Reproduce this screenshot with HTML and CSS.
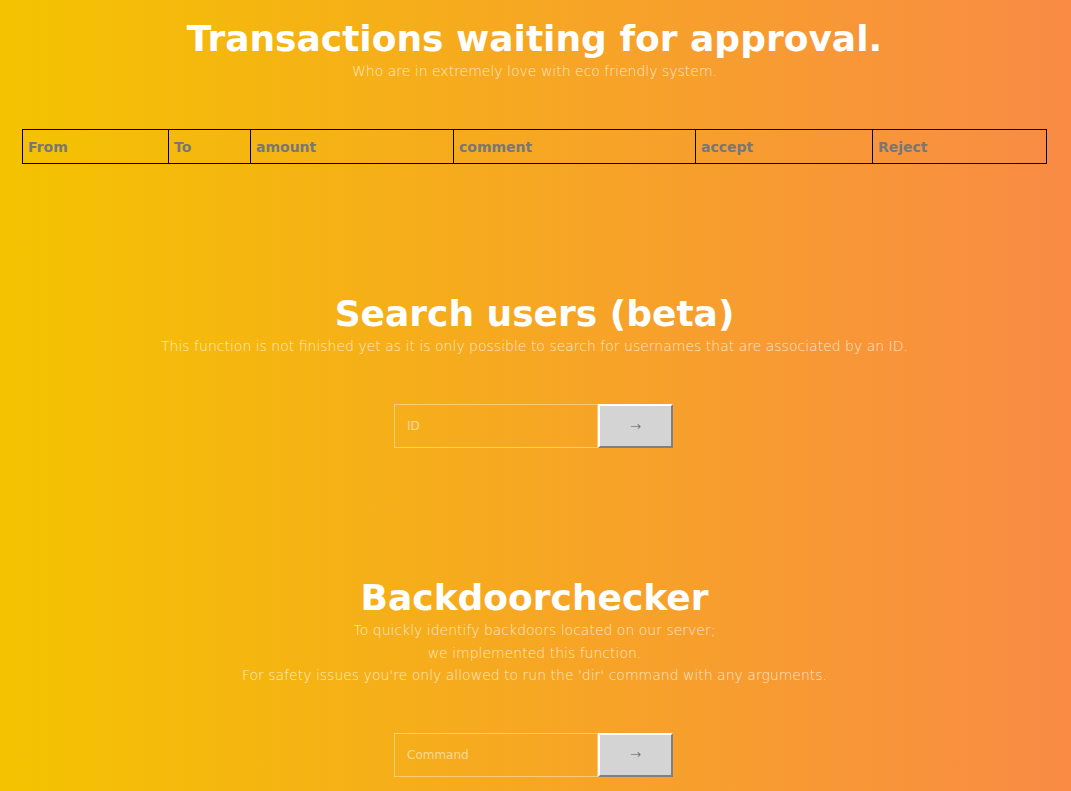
FILE: index.html
```html
<!DOCTYPE html>
<html lang="en">
<head>
  <meta charset="UTF-8">
  <title>Dashboard</title>
  <link rel="stylesheet" href="styles.css">
</head>
<body>

<div class="page">

  <div class="section pending">
    <h1>Transactions waiting for approval.</h1>
    <p class="lead">Who are in extremely love with eco friendly system.</p>
    <table class="tx">
      <tr>
        <th class="c-from">From</th>
        <th class="c-to">To</th>
        <th class="c-amount">amount</th>
        <th class="c-comment">comment</th>
        <th class="c-accept">accept</th>
        <th class="c-reject">Reject</th>
      </tr>
    </table>
  </div>

  <div class="section search">
    <h1>Search users (beta)</h1>
    <p class="lead">This function is not finished yet as it is only possible to search for usernames that are associated by an ID.</p>
    <form class="inline-form">
      <input type="text" placeholder="ID">
      <button type="button">&rarr;</button>
    </form>
  </div>

  <div class="section backdoor">
    <h1>Backdoorchecker</h1>
    <p class="lead">To quickly identify backdoors located on our server;<br>
      we implemented this function.<br>
      For safety issues you're only allowed to run the 'dir' command with any arguments.</p>
    <form class="inline-form">
      <input type="text" placeholder="Command">
      <button type="button">&rarr;</button>
    </form>
  </div>

</div>

</body>
</html>
```

FILE: styles.css
```css
* {
  margin: 0;
  padding: 0;
  box-sizing: border-box;
}

html,
body {
  height: 100%;
}

body {
  font-family: "DejaVu Sans", sans-serif;
  background: linear-gradient(to right, #f4c300, #f98b45);
  color: #fff;
  overflow: hidden;
}

.page {
  padding: 0 24px 0 22px;
}

.section {
  text-align: center;
}

.section h1 {
  font-size: 36px;
  font-weight: bold;
  line-height: 44px;
}

.lead {
  font-size: 14px;
  font-weight: 200;
  line-height: 22px;
  color: rgba(255, 255, 255, .75);
}

.pending {
  padding-top: 17px;
}

.pending .lead,
.search .lead {
  margin-top: -1px;
}

.tx {
  width: 100%;
  margin-top: 47px;
  border-collapse: collapse;
  border: 1px solid #000;
}

.tx th {
  border: 1px solid #000;
  height: 34px;
  padding: 0 5px;
  text-align: left;
  font-size: 14px;
  font-weight: bold;
  color: #777;
}

.c-from { width: 146px; }
.c-to { width: 82px; }
.c-amount { width: 203px; }
.c-comment { width: 242px; }
.c-accept { width: 177px; }

.search {
  padding-top: 128px;
}

.backdoor {
  padding-top: 128px;
}

.backdoor .lead {
  margin-top: -1px;
  line-height: 22.5px;
}

.inline-form {
  display: flex;
  justify-content: center;
  margin: 47px 2px 0 0;
}

.backdoor .inline-form {
  margin-top: 46px;
}

.inline-form input {
  width: 204px;
  height: 44px;
  padding: 0 12px;
  background: transparent;
  border: 1px solid rgba(255, 255, 255, .4);
  font-family: "DejaVu Sans", sans-serif;
  font-size: 12px;
  color: #fff;
  outline: none;
}

.inline-form input::placeholder {
  color: rgba(255, 255, 255, .55);
}

.inline-form button {
  width: 75px;
  height: 44px;
  background: #d4d4d4;
  border: 2px solid;
  border-color: #fff #808080 #808080 #fff;
  font-family: "DejaVu Sans", sans-serif;
  font-size: 13px;
  font-weight: 200;
  color: #555;
}
```
